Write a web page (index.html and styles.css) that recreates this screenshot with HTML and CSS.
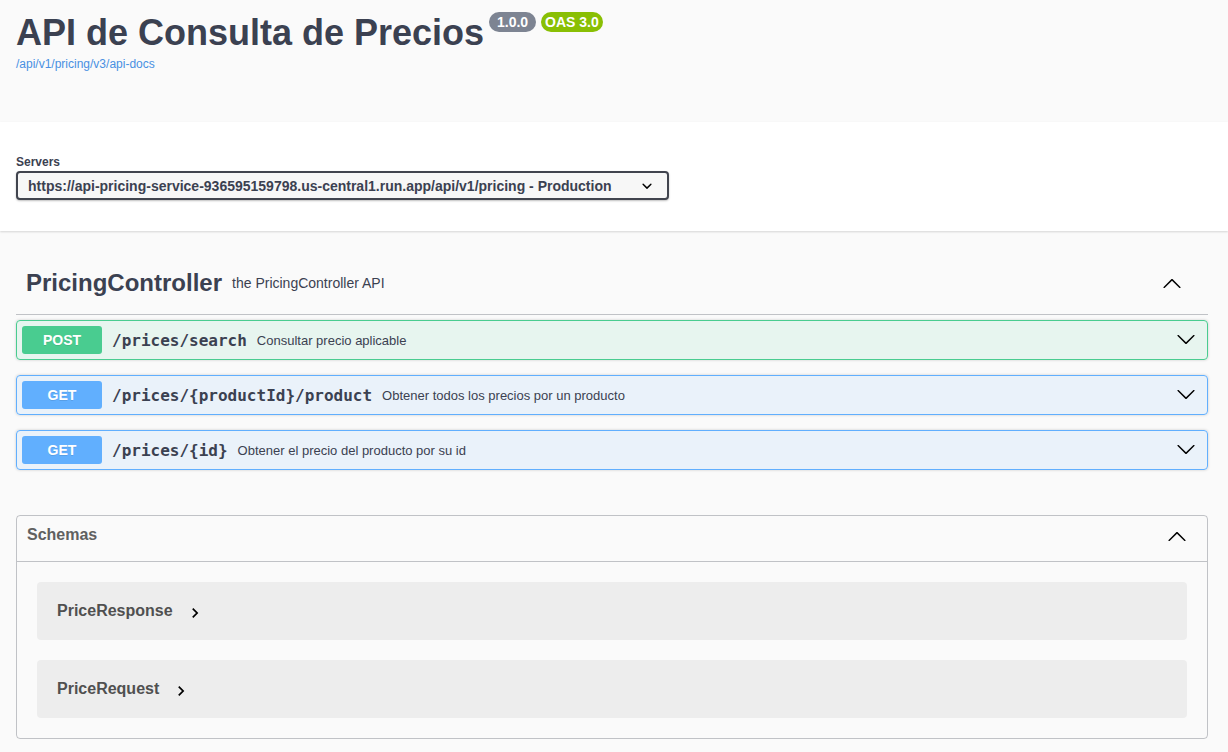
FILE: index.html
```html
<!DOCTYPE html>
<html lang="es">
<head>
<meta charset="utf-8">
<title>API de Consulta de Precios</title>
<link rel="stylesheet" href="styles.css">
</head>
<body>
<div class="info">
  <h2 class="title"><span class="title-text">API de Consulta de Precios</span><small class="badge version">&#32;1.0.0&#32;</small><small class="badge oas">OAS 3.0</small></h2>
  <div class="url-line"><a class="link" href="#">/api/v1/pricing/v3/api-docs</a></div>
</div>

<div class="scheme-container">
  <span class="servers-title">Servers</span>
  <div class="select">
    <span class="select-text">https://api-pricing-service-936595159798.us-central1.run.app/api/v1/pricing - Production</span>
    <svg class="select-arrow" width="20" height="20" viewBox="0 0 20 20"><path d="M13.418 7.859a.695.695 0 01.978 0 .68.68 0 010 .969l-3.908 3.83a.697.697 0 01-.979 0l-3.908-3.830a.68.68 0 010-.969.695.695 0 01.978 0L10 11l3.418-3.141z"/></svg>
  </div>
</div>

<div class="wrapper">
  <section class="tag-section">
    <h3 class="opblock-tag">
      <span class="tag-name">PricingController</span>
      <small class="tag-desc">the PricingController API</small>
      <button class="expand-operation" type="button">
        <svg width="20" height="20" viewBox="0 0 20 20"><path d="M17.418 14.908C17.69 15.176 18.127 15.176 18.397 14.908C18.667 14.64 18.668 14.207 18.397 13.939L10.489 6.109C10.219 5.841 9.782 5.841 9.51 6.109L1.602 13.939C1.332 14.207 1.332 14.64 1.602 14.908C1.873 15.176 2.311 15.176 2.581 14.908L10 7.767L17.418 14.908Z"/></svg>
      </button>
    </h3>
    <div class="opblocks">
      <div class="opblock opblock-post">
        <span class="method">POST</span>
        <span class="path">/prices/search</span>
        <span class="desc">Consultar precio aplicable</span>
        <button class="control-arrow" type="button"><svg width="20" height="20" viewBox="0 0 20 20"><path d="M17.418 6.109c.272-.268.709-.268.979 0s.271.701 0 .969l-7.908 7.83c-.27.268-.707.268-.979 0l-7.908-7.83c-.27-.268-.27-.701 0-.969.271-.268.709-.268.979 0L10 13.25l7.418-7.141z"/></svg></button>
      </div>
      <div class="opblock opblock-get">
        <span class="method">GET</span>
        <span class="path">/prices/{productId}/product</span>
        <span class="desc">Obtener todos los precios por un producto</span>
        <button class="control-arrow" type="button"><svg width="20" height="20" viewBox="0 0 20 20"><path d="M17.418 6.109c.272-.268.709-.268.979 0s.271.701 0 .969l-7.908 7.83c-.27.268-.707.268-.979 0l-7.908-7.83c-.27-.268-.27-.701 0-.969.271-.268.709-.268.979 0L10 13.25l7.418-7.141z"/></svg></button>
      </div>
      <div class="opblock opblock-get">
        <span class="method">GET</span>
        <span class="path">/prices/{id}</span>
        <span class="desc">Obtener el precio del producto por su id</span>
        <button class="control-arrow" type="button"><svg width="20" height="20" viewBox="0 0 20 20"><path d="M17.418 6.109c.272-.268.709-.268.979 0s.271.701 0 .969l-7.908 7.83c-.27.268-.707.268-.979 0l-7.908-7.83c-.27-.268-.27-.701 0-.969.271-.268.709-.268.979 0L10 13.25l7.418-7.141z"/></svg></button>
      </div>
    </div>
  </section>

  <section class="models">
    <h4 class="models-head">
      <span class="models-title">Schemas</span>
      <button class="models-toggle" type="button">
        <svg width="20" height="20" viewBox="0 0 20 20"><path d="M17.418 14.908C17.69 15.176 18.127 15.176 18.397 14.908C18.667 14.64 18.668 14.207 18.397 13.939L10.489 6.109C10.219 5.841 9.782 5.841 9.51 6.109L1.602 13.939C1.332 14.207 1.332 14.64 1.602 14.908C1.873 15.176 2.311 15.176 2.581 14.908L10 7.767L17.418 14.908Z"/></svg>
      </button>
    </h4>
    <div class="model-list">
      <div class="model-container">
        <span class="model-title">PriceResponse</span>
        <svg class="model-toggle" width="20" height="20" viewBox="0 0 24 24"><path d="M10 6L8.59 7.41 13.17 12l-4.58 4.59L10 18l6-6z"/></svg>
      </div>
      <div class="model-container">
        <span class="model-title">PriceRequest</span>
        <svg class="model-toggle" width="20" height="20" viewBox="0 0 24 24"><path d="M10 6L8.59 7.41 13.17 12l-4.58 4.59L10 18l6-6z"/></svg>
      </div>
    </div>
  </section>
</div>
</body>
</html>
```
FILE: styles.css
```css
html, body {
  margin: 0;
  padding: 0;
}

body {
  background: #fafafa;
  font-family: "Liberation Sans", Arial, sans-serif;
  color: #3b4151;
}

/* ---------- info ---------- */
.info {
  padding: 12px 16px 51px;
}

.title {
  display: flex;
  align-items: flex-start;
  margin: 0;
  font-size: 36px;
  font-weight: 700;
  color: #3b4151;
  line-height: normal;
}

.badge {
  display: inline-block;
  margin: 0 0 0 5px;
  padding: 2px 4px;
  border-radius: 57px;
  font-size: 14px;
  font-weight: 700;
  line-height: normal;
  color: #fff;
  white-space: pre;
}

.badge.version {
  background: #7d8492;
}

.badge.oas {
  background: #89bf04;
}

.url-line {
  margin-top: 3px;
  font-size: 12px;
  line-height: normal;
}

.link {
  color: #4990e2;
  text-decoration: none;
}

/* ---------- servers ---------- */
.scheme-container {
  background: #fff;
  box-shadow: 0 1px 2px 0 rgba(0, 0, 0, 0.15);
  padding: 33px 16px 31px;
  position: relative;
}

.servers-title {
  display: block;
  font-size: 12px;
  font-weight: 700;
  line-height: normal;
  color: #3b4151;
}

.select {
  display: flex;
  width: max-content;
  box-sizing: border-box;
  height: 29px;
  align-items: center;
  margin-top: 2px;
  padding: 0 10px;
  border: 2px solid #41444e;
  border-radius: 4px;
  background: #f7f7f7;
  box-shadow: 0 1px 2px 0 rgba(0, 0, 0, 0.25);
  font-size: 14px;
  font-weight: 700;
  color: #3b4151;
  line-height: normal;
}

.select-arrow {
  margin-left: 25px;
  flex: none;
  fill: #000;
}

/* ---------- operations ---------- */
.wrapper {
  padding: 0 20px 20px 16px;
}

.tag-section {
  margin-top: 28px;
}

.opblock-tag {
  display: flex;
  align-items: center;
  margin: 0 0 5px;
  padding: 10px 20px 17px 10px;
  border-bottom: 1px solid rgba(59, 65, 81, 0.3);
  font-weight: 700;
  color: #3b4151;
}

.tag-name {
  font-size: 24px;
  line-height: normal;
}

.tag-desc {
  flex: 1;
  padding: 0 10px;
  font-size: 14px;
  font-weight: 400;
  line-height: normal;
}

.expand-operation,
.control-arrow,
.models-toggle {
  background: none;
  border: none;
  margin: 0;
  padding: 1px 6px;
  display: flex;
  cursor: pointer;
}

.expand-operation svg,
.control-arrow svg,
.models-toggle svg {
  fill: #000;
}

.opblocks {
  display: flex;
  flex-direction: column;
  gap: 15px;
}

.opblock {
  display: flex;
  align-items: center;
  padding: 5px;
  border: 1px solid;
  border-radius: 4px;
  box-shadow: 0 0 3px rgba(0, 0, 0, 0.19);
}

.opblock-post {
  border-color: #49cc90;
  background: rgba(73, 204, 144, 0.1);
}

.opblock-get {
  border-color: #61affe;
  background: rgba(97, 175, 254, 0.1);
}

.method {
  min-width: 80px;
  padding: 6px 0;
  border-radius: 3px;
  text-align: center;
  font-size: 14px;
  font-weight: 700;
  line-height: normal;
  color: #fff;
  text-shadow: 0 1px 0 rgba(0, 0, 0, 0.1);
}

.opblock-post .method {
  background: #49cc90;
}

.opblock-get .method {
  background: #61affe;
}

.path {
  padding: 0 10px;
  font-family: "DejaVu Sans Mono", monospace;
  font-size: 16px;
  font-weight: 700;
  color: #3b4151;
}

.desc {
  flex: 1;
  font-size: 13px;
  color: #3b4151;
}

.control-arrow svg {
  margin-bottom: 3px;
}

/* ---------- models ---------- */
.models {
  margin-top: 45px;
  border: 1px solid rgba(59, 65, 81, 0.3);
  border-radius: 4px;
}

.models-head {
  display: flex;
  align-items: flex-start;
  margin: 0;
  padding: 10px 20px 10px 10px;
  border-bottom: 1px solid rgba(59, 65, 81, 0.3);
  font-size: 16px;
  font-weight: 700;
  color: #606060;
}

.models-title {
  flex: 1;
  line-height: normal;
}

.models-toggle {
  padding: 0;
  height: 25px;
  align-items: flex-start;
}

.model-list {
  display: flex;
  flex-direction: column;
  gap: 20px;
  padding: 20px;
}

.model-container {
  display: flex;
  align-items: center;
  height: 58px;
  padding: 0 20px;
  border-radius: 4px;
  background: rgba(0, 0, 0, 0.05);
}

.model-title {
  font-size: 16px;
  font-weight: 700;
  color: #505050;
}

.model-toggle {
  margin: 4px 0 0 12px;
  fill: #000;
}
```
